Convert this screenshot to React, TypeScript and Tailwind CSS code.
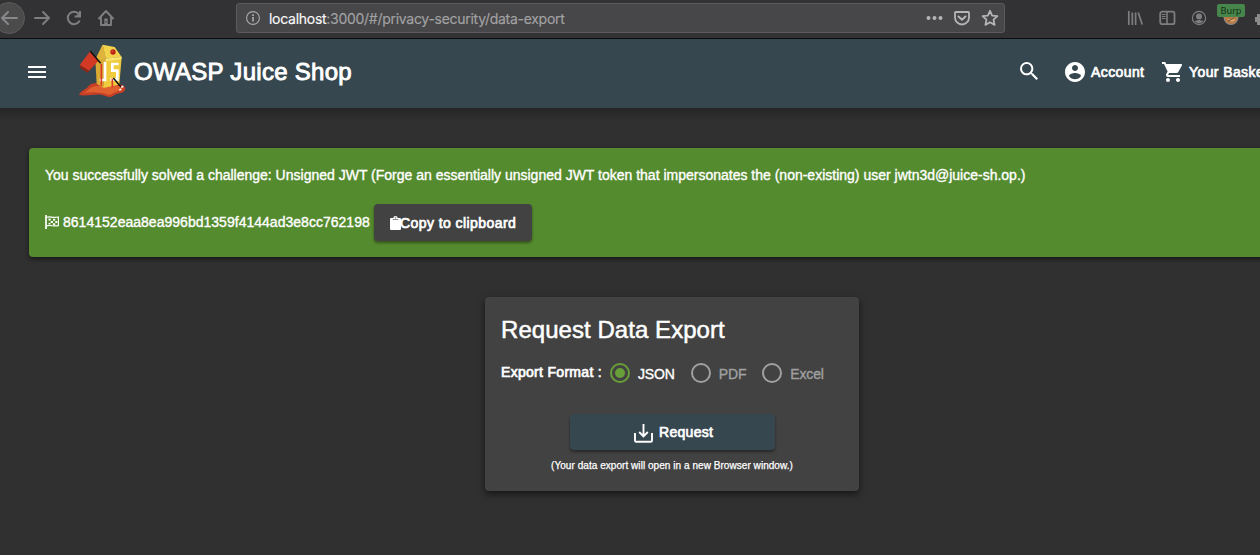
import React from "react";

const STROKE = "[-webkit-text-stroke:0.35px_currentColor]";

function BrowserBar() {
  return (
    <div className="flex h-[39px] w-[1260px] shrink-0 items-start overflow-hidden border-b border-[#0c0c0d] bg-[#323234]">
      <div className="-ml-[7px] mt-[2px] flex h-8 w-8 shrink-0 items-center justify-center rounded-full border border-[#5a5a5b] bg-[#4b4b4c]">
        <svg width="18" height="18" viewBox="0 0 18 18" fill="none" stroke="#88888a" strokeWidth="2" strokeLinecap="round" strokeLinejoin="round">
          <path d="M17 9H2M8 3 2 9l6 6" />
        </svg>
      </div>
      <svg className="ml-[8px] mt-[9px] shrink-0" width="18" height="18" viewBox="0 0 18 18" fill="none" stroke="#7e7e80" strokeWidth="2" strokeLinecap="round" strokeLinejoin="round">
        <path d="M2 9h14M10 3l6 6-6 6" />
      </svg>
      <svg className="ml-[14px] mt-[9px] shrink-0" width="18" height="18" viewBox="0 0 18 18" fill="none" stroke="#7e7e80" strokeWidth="2">
        <path d="M14.300 12.200A6.200 6.200 0 1 1 13.800 5" strokeLinecap="round" />
        <path d="M15.900 2.200v5.300h-5.300z" fill="#7e7e80" stroke="none" />
        <path d="M15 2v5.600H9.600" />
      </svg>
      <svg className="ml-[14px] mt-[9px] shrink-0" width="18" height="18" viewBox="0 0 18 18" fill="none" stroke="#7e7e80" strokeWidth="1.900" strokeLinecap="round" strokeLinejoin="round">
        <path d="M2 9.500 9 2l7 7.500M4 8.500V16h10V8.500" />
        <path d="M9 9.500v6" strokeWidth="3.400" strokeLinecap="butt" />
        <path d="M9 12v1.500" stroke="#323234" strokeWidth="1" strokeLinecap="butt" />
      </svg>
      <div className="ml-[121px] mt-[3px] flex h-[30px] w-[769px] shrink-0 items-center rounded-[3px] border border-[#5b5b5d] bg-[#474749]">
        <svg className="ml-[9px] shrink-0" width="14" height="14" viewBox="0 0 14 14" fill="none" stroke="#aaaaab">
          <circle cx="7" cy="7" r="6.400" strokeWidth="1.100" />
          <path d="M7 6v4.500" strokeWidth="1.700" />
          <path d="M7 3.300v1.700" strokeWidth="1.700" />
        </svg>
        <div className="ml-[9px] mt-[2px] flex-1 whitespace-nowrap font-['Inter','Liberation_Sans',sans-serif] text-[14px] leading-[20px] tracking-[-0.28px] text-[#a2a2a3] [-webkit-text-stroke:0.15px_currentColor]">
          <span className="text-[#f9f9fa]">localhost</span>:3000/#/privacy-security/data-export
        </div>
        <svg className="shrink-0" width="17" height="18" viewBox="0 0 17 18" fill="#b5b5b6">
          <circle cx="2.500" cy="9" r="2" />
          <circle cx="8.500" cy="9" r="2" />
          <circle cx="14.500" cy="9" r="2" />
        </svg>
        <svg className="ml-[10px] shrink-0" width="18" height="18" viewBox="0 0 18 18" fill="none" stroke="#b5b5b6" strokeWidth="2" strokeLinecap="round" strokeLinejoin="round">
          <path d="M2.800 3h12.400a.8.8 0 0 1 .8.8v4.700a7 7 0 0 1-14 0V3.800a.8.8 0 0 1 .8-.8z" strokeWidth="1.800" />
          <path d="M5.500 7.500 9 10.800l3.500-3.300" />
        </svg>
        <svg className="ml-[10px] mr-[5px] shrink-0" width="18" height="18" viewBox="0 0 18 18" fill="none" stroke="#b5b5b6" strokeWidth="1.800" strokeLinejoin="round">
          <path d="m9 1.800 2.150 4.800 5.250.55-3.900 3.500 1.100 5.200L9 13.200l-4.600 2.650 1.100-5.200-3.900-3.500 5.250-.55z" />
        </svg>
      </div>
      <svg className="ml-[122px] mt-[10px] shrink-0" width="17" height="16" viewBox="0 0 17 16" fill="none" stroke="#7e7e80" strokeWidth="1.700">
        <path d="M1.800 1v14M5.300 2.500V15M8.600 2.500V15M11.200 2.600l4 12" />
      </svg>
      <svg className="ml-[15px] mt-[10px] shrink-0" width="17" height="16" viewBox="0 0 17 16" fill="none" stroke="#7e7e80">
        <rect x="1.200" y="1.700" width="14.300" height="12.500" rx="2" strokeWidth="1.800" />
        <path d="M8 2v12" strokeWidth="1.600" />
        <path d="M3 4.500h3.500M3 6.500h3.500M3 8.500h3.500" />
      </svg>
      <svg className="ml-[15px] mt-[10px] shrink-0" width="16" height="16" viewBox="0 0 16 16">
        <circle cx="8" cy="8" r="6.600" fill="none" stroke="#7e7e80" strokeWidth="1.200" />
        <circle cx="8" cy="6.500" r="3" fill="#7e7e80" />
        <path d="M3.500 10.500c1.500.6 2.300-.6 4.500-.6s3 1.200 4.500.6c-.8 1.700-2.500 2.900-4.500 2.900s-3.700-1.200-4.500-2.900z" fill="#7e7e80" />
      </svg>
      <div className="relative ml-[10px] mt-[4px] h-[24px] w-[28px] shrink-0">
        <svg className="ml-[6px] mt-[5px]" width="16" height="17" viewBox="0 0 16 17">
          <circle cx="8" cy="8.500" r="7.500" fill="#8f8b88" />
          <circle cx="8" cy="8.500" r="6.300" fill="#b97a42" />
          <path d="M4 10h7l2 1-4 2z" fill="#d8a06a" />
          <path d="m5 12 6-3" stroke="#6e543e" />
        </svg>
        <div className="absolute left-0 top-0 h-[13px] w-[28px] rounded-[2px] bg-[#47864b] text-center font-['DejaVu_Sans',sans-serif] text-[9px] leading-[14px] tracking-[-0.1px] text-[#17301a]">Burp</div>
      </div>
      <svg className="ml-[10px] mt-[11px] shrink-0" width="14" height="14" viewBox="0 0 14 14" fill="#8a8a8b">
        <path d="M2 3h3V1h4v2h3v11H2v-3H0V6h2z" />
      </svg>
    </div>
  );
}

function JuiceLogo() {
  return (
    <svg className="-mt-[5px] ml-[32px] shrink-0" width="48" height="54" viewBox="24 18 144 162">
      <path d="M27 170c8-14 20-14 28-25 6-8 14-9 25-9l75 4c14 4 14 20 0 24l-17 4c-8 5-12 10-22 9l-22-7c-24-2-45 5-67 1z" fill="#c93f26" />
      <path d="M38 166c18-6 20-20 40-22l70 0c14 4 8 14-6 16l-24 11c-26-9-50-10-80-5z" fill="#e06030" />
      <path d="m98 20-22 45 4 72 20 12 7-87z" fill="#d9ab34" />
      <path d="M107 62 155 57l-7 83-48 10z" fill="#f0cb3e" />
      <path d="m98 20 36 7 21 30-48 5z" fill="#f2d44c" />
      <path d="m98 20-22 45 11 2 20-5z" fill="#dfb43c" />
      <path d="m107 62 48-5-1 7-48 6z" fill="#fae676" />
      <path d="M105 71v55H89" fill="none" stroke="#fff" strokeWidth="8" />
      <path d="M146 78h-19v20h15v27h-21" fill="none" stroke="#fff" strokeWidth="8" />
      <path d="M94 78v66M127 122v26" stroke="#dc3c25" strokeWidth="5" />
      <circle cx="129" cy="42" r="8" fill="#bd211a" />
      <circle cx="127" cy="40" r="3" fill="#e24b32" />
      <path d="m61 39 24 30-28 29-28-17z" fill="#d23a25" />
      <path d="m29 81 28 17 8-7-12 13-22-14z" fill="#922416" />
      <path d="m61 40 31 36M130 120l23 27" stroke="#101010" strokeWidth="4.500" />
      <path d="m148 156 6-2M154 148l6-3" stroke="#fff" strokeWidth="5" />
    </svg>
  );
}

function Header() {
  return (
    <header className="flex h-[69px] w-[1260px] shrink-0 items-center overflow-hidden whitespace-nowrap bg-[#37474f] text-white">
      <svg className="-mt-[3px] ml-[28px] shrink-0" width="18" height="12" viewBox="0 0 18 12" fill="#fff">
        <path d="M0 0h18v2H0zM0 5h18v2H0zM0 10h18v2H0z" />
      </svg>
      <JuiceLogo />
      <div className="-mt-[3px] ml-[8px] w-[886px] shrink-0 text-[24px] leading-[32px] tracking-[0.28px] [-webkit-text-stroke:0.9px_currentColor]">OWASP Juice Shop</div>
      <svg className="-mt-[5px] shrink-0" width="18" height="18" viewBox="3 3 17.500 17.500" fill="#fff">
        <path d="M15.500 14h-.79l-.28-.27A6.471 6.471 0 0 0 16 9.500 6.500 6.500 0 1 0 9.500 16c1.610 0 3.090-.59 4.230-1.570l.27.28v.79l5 4.990L20.490 19l-4.990-5zm-6 0C7.010 14 5 11.990 5 9.500S7.010 5 9.500 5 14 7.010 14 9.500 11.990 14 9.500 14z" />
      </svg>
      <svg className="-mt-[3px] ml-[25px] shrink-0" width="24" height="24" viewBox="0 0 24 24" fill="#fff">
        <path d="M12 2C6.480 2 2 6.480 2 12s4.480 10 10 10 10-4.480 10-10S17.520 2 12 2zm0 3c1.660 0 3 1.340 3 3s-1.340 3-3 3-3-1.340-3-3 1.340-3 3-3zm0 14.200a7.200 7.200 0 0 1-6-3.220c.03-1.990 4-3.080 6-3.080 1.990 0 5.970 1.090 6 3.080a7.200 7.200 0 0 1-6 3.220z" />
      </svg>
      <div className="-mt-[3px] ml-[4px] w-[70px] shrink-0 text-[14px] leading-[20px] tracking-[0.4px] [-webkit-text-stroke:0.7px_currentColor]">Account</div>
      <svg className="-mt-[3px] shrink-0" width="24" height="24" viewBox="0 0 24 24" fill="#fff">
        <path d="M7 18c-1.100 0-1.990.9-1.990 2S5.900 22 7 22s2-.9 2-2-.9-2-2-2zM1 2v2h2l3.600 7.590-1.350 2.450c-.16.28-.25.61-.25.960 0 1.100.9 2 2 2h12v-2H7.420c-.14 0-.25-.11-.25-.25l.03-.12.9-1.630h7.450c.75 0 1.410-.41 1.750-1.030l3.580-6.490A1.003 1.003 0 0 0 20 4H5.210l-.94-2H1zm16 16c-1.100 0-1.990.9-1.990 2s.89 2 1.990 2 2-.9 2-2-.9-2-2-2z" />
      </svg>
      <div className="-mt-[3px] ml-[4px] shrink-0 text-[14px] leading-[20px] tracking-[0.4px] [-webkit-text-stroke:0.7px_currentColor]">Your Basket</div>
    </header>
  );
}

function ChallengeBanner() {
  return (
    <section className="ml-[29px] mt-[40px] h-[109px] w-[1260px] shrink-0 whitespace-nowrap rounded-[4px] bg-[#558b2f] pl-4 pt-[17px] text-[14px] leading-[20px] text-white shadow-[0_2px_5px_rgba(0,0,0,0.55)]">
      <p className={STROKE}>You successfully solved a challenge: Unsigned JWT (Forge an essentially unsigned JWT token that impersonates the (non-existing) user jwtn3d@juice-sh.op.)</p>
      <div className="mt-[19px] flex h-[37px] items-center">
        <svg className="-mt-[2px] shrink-0" width="14" height="14" viewBox="0 0 14 14" fill="none" stroke="#fff">
          <path d="M1 0v14" strokeWidth="1.700" />
          <path d="M1.500 2.300c4-1.300 6 1 11.900-.3v8.600c-4.400 1.300-7.400-1-11.900.2" strokeWidth="1.200" />
          <path d="M3.500 3.500h2.200v2H3.500zM8 3.800h2.200v2H8zM5.700 6h2.200v2H5.700zM10.300 6h2v2h-2zM3.500 8h2v1.500h-2zM8 8.300h2.200v1.700H8z" fill="#fff" stroke="none" />
        </svg>
        <span className={"-mt-[2px] ml-[4px] w-[311px] tracking-[0.02px] " + STROKE}>8614152eaa8ea996bd1359f4144ad3e8cc762198</span>
        <button className="flex h-[37px] w-[158px] items-center rounded-[4px] bg-[#424242] pl-4 pt-[1px] shadow-[0_2px_3px_rgba(0,0,0,0.4)]">
          <svg className="shrink-0" width="11" height="14" viewBox="0 0 10 14" preserveAspectRatio="none">
            <path d="M1 2h2a2 2 0 0 1 4 0h2a1 1 0 0 1 1 1v10a1 1 0 0 1-1 1H1a1 1 0 0 1-1-1V3a1 1 0 0 1 1-1z" fill="#fff" />
            <path d="M2.500 3.500h5M5 1v1.500" stroke="#888" strokeWidth="1.200" />
          </svg>
          <span className="-ml-[1px] tracking-[0.43px] [-webkit-text-stroke:0.7px_currentColor]">Copy to clipboard</span>
        </button>
      </div>
    </section>
  );
}

function RadioOption({ label, selected }: { label: string; selected?: boolean }) {
  return (
    <label className={selected ? "flex items-center text-white" : "flex items-center text-[#a0a0a0]"}>
      <span className={selected ? "flex h-5 w-5 items-center justify-center rounded-full border-2 border-[#689f38]" : "h-5 w-5 rounded-full border-2 border-[#a0a0a0]"}>
        {selected && <span className="h-[10px] w-[10px] rounded-full bg-[#689f38]" />}
      </span>
      <span className={"ml-2 pt-[2px] tracking-[-0.15px] " + STROKE}>{label}</span>
    </label>
  );
}

function ExportCard() {
  return (
    <section className="ml-[485px] mt-[40px] flex h-[194px] w-[374px] shrink-0 flex-col whitespace-nowrap rounded-[4px] bg-[#424242] px-4 text-[14px] leading-[20px] text-white shadow-[0_3px_7px_rgba(0,0,0,0.55)]">
      <h1 className="mt-[17px] text-[24px] leading-[32px] tracking-[0.05px] [-webkit-text-stroke:0.5px_currentColor]">Request Data Export</h1>
      <div className="mt-[16px] flex h-[22px] items-center">
        <span className="-mt-[2px] w-[109px] tracking-[0.3px] [-webkit-text-stroke:0.7px_currentColor]">Export Format :</span>
        <div className="flex gap-4">
          <RadioOption label="JSON" selected />
          <RadioOption label="PDF" />
          <RadioOption label="Excel" />
        </div>
      </div>
      <button className="ml-[69px] mt-[30px] flex h-[36px] w-[205px] items-center rounded-[4px] bg-[#37474f] pl-[64px] shadow-[0_2px_3px_rgba(0,0,0,0.4)]">
        <svg className="mt-[2px] shrink-0" width="19" height="19" viewBox="0 0 19 19" fill="none" stroke="#fff" strokeWidth="1.900">
          <path d="M1 9v7.500c0 .8.500 1.300 1.300 1.300h14.400c.8 0 1.300-.5 1.300-1.300V9" />
          <path d="M9.500 0v12M5.200 8l4.300 4.300L13.800 8" />
        </svg>
        <span className="ml-[6px] tracking-[0.3px] [-webkit-text-stroke:0.7px_currentColor]">Request</span>
      </button>
      <p className="mt-[6px] text-center text-[10px] tracking-[0.05px] [-webkit-text-stroke:0.25px_currentColor]">(Your data export will open in a new Browser window.)</p>
    </section>
  );
}

export default function App() {
  return (
    <div className="flex h-[555px] w-[1260px] flex-col overflow-hidden bg-[#303030] font-['Liberation_Sans',Arial,sans-serif]">
      <BrowserBar />
      <Header />
      <div className="flex flex-1 flex-col overflow-hidden bg-[linear-gradient(#252525,#303030_12px)]">
        <ChallengeBanner />
        <ExportCard />
      </div>
    </div>
  );
}
